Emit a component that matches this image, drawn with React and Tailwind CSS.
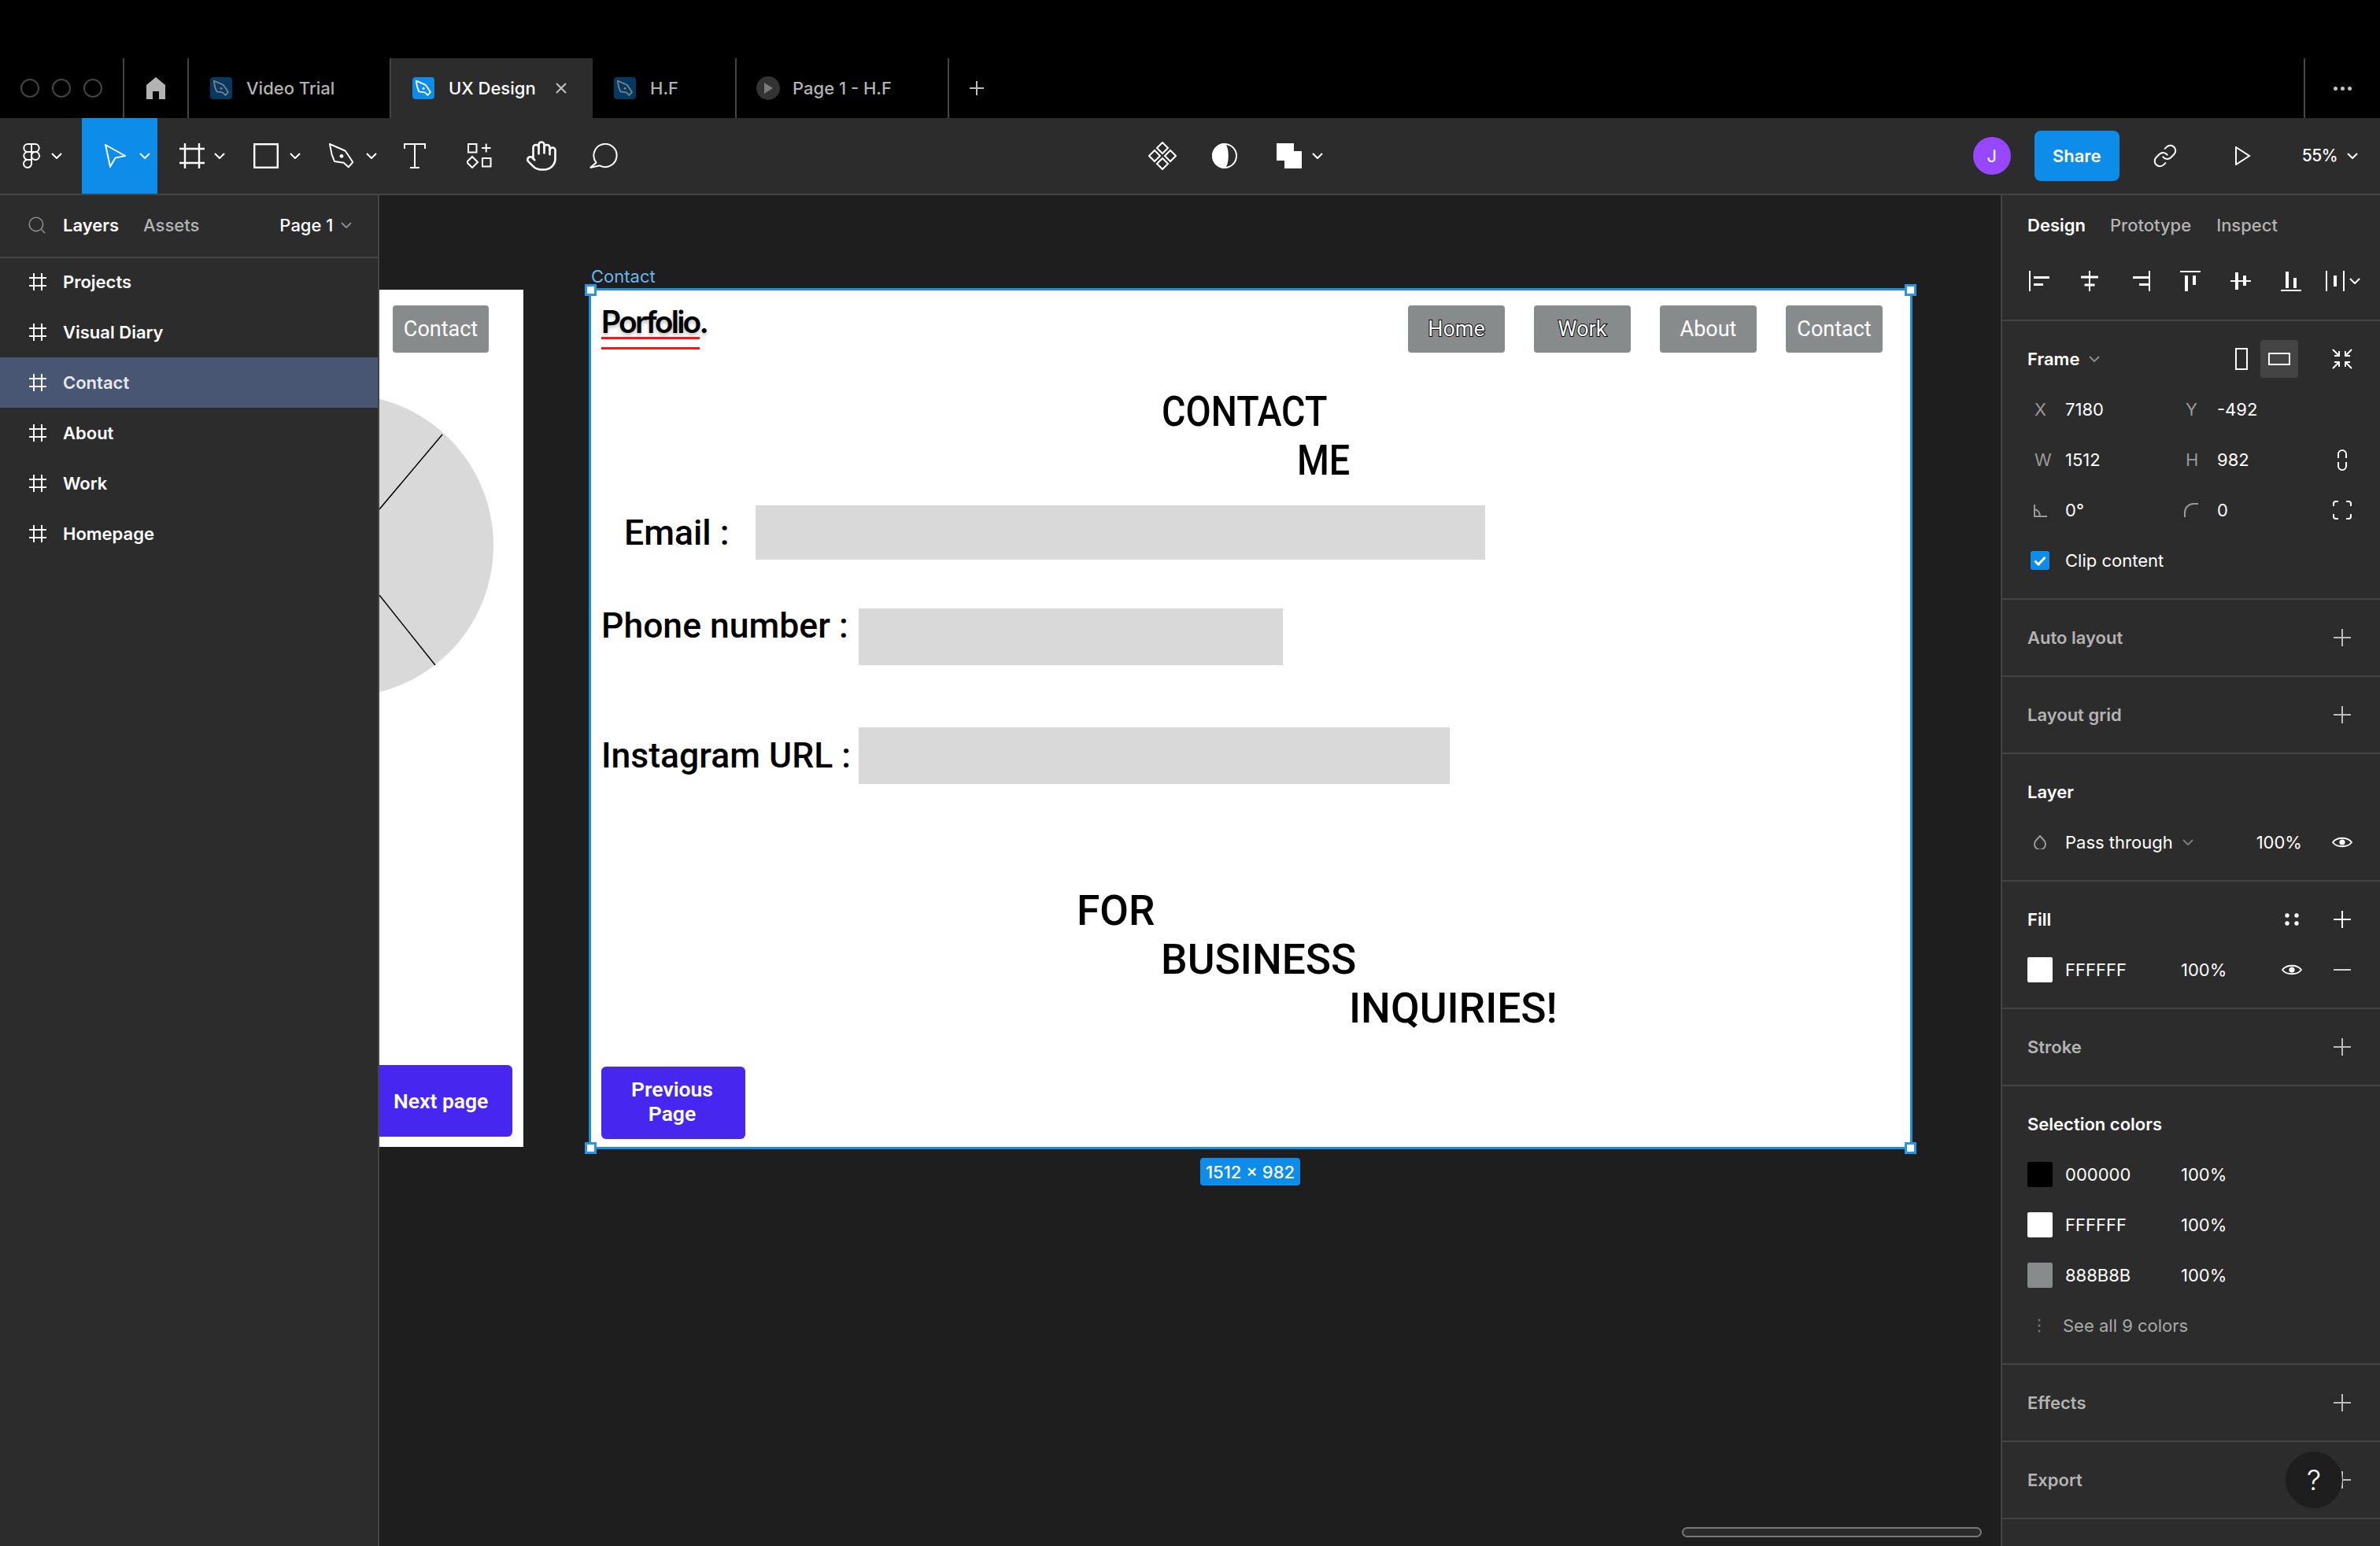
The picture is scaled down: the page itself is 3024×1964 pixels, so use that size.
import React from 'react'
import { Search, Hand, Link } from 'lucide-react'

const Chevron = ({ color = '#fff', className = '' }) => (
  <svg width="14" height="8" viewBox="0 0 14 8" fill="none" stroke={color} strokeWidth="2" className={`shrink-0 ${className}`}>
    <path d="M1 1l6 6 6-6" />
  </svg>
)

const Plus = ({ color = '#bdbdbd' }) => (
  <svg width="22" height="22" viewBox="0 0 22 22" stroke={color} strokeWidth="2">
    <path d="M11 0v22M0 11h22" />
  </svg>
)

const Eye = () => (
  <svg width="26" height="16" viewBox="0 0 26 16" fill="none" stroke="#fff" strokeWidth="1.8">
    <path d="M1 8C6 1 20 1 25 8 20 15 6 15 1 8Z" />
    <circle cx="13" cy="8" r="3.6" fill="#fff" stroke="none" />
  </svg>
)

const Hash = () => (
  <svg width="22" height="22" viewBox="0 0 22 22" stroke="#fff" strokeWidth="2">
    <path d="M6 0v22M16 0v22M0 6h22M0 16h22" />
  </svg>
)

const PenNib = ({ size = 32, color = '#fff', width = 2 }) => (
  <svg width={size} height={size} viewBox="0 0 32 32" fill="none" stroke={color} strokeWidth={width} strokeLinejoin="round">
    <path d="M1 1l19.5 8.5 3.5 5 6.3 9.5-5.6 6.3-6-5.6L7 23 3.7 14.7z" />
    <circle cx="16" cy="16.3" r="2.4" fill={color} stroke="none" />
  </svg>
)

const FileIcon = ({ active }) => (
  <div className={`flex h-[28px] w-[28px] items-center justify-center rounded-[4px] ${active ? 'bg-[#0d8ce9]' : 'bg-[#06395f]'}`}>
    <PenNib size={20} color={active ? '#fff' : '#75808a'} width={3} />
  </div>
)

const Tab = ({ width, label, active, pad = 27 }) => (
  <div
    style={{ width, paddingLeft: pad }}
    className={`flex h-full items-center ${active ? 'bg-[#2c2c2c] text-white' : 'border-r-2 border-[#444] text-[#b3b3b3]'}`}
  >
    <FileIcon active={active} />
    <span className="ml-[18px] font-medium">{label}</span>
    {active && (
      <svg width="14" height="14" viewBox="0 0 14 14" stroke="#c4c4c4" strokeWidth="2" className="ml-[25px]">
        <path d="M1 1l12 12M13 1L1 13" />
      </svg>
    )}
  </div>
)

const layers = ['Projects', 'Visual Diary', 'Contact', 'About', 'Work', 'Homepage']

const LeftPanel = () => (
  <aside className="flex w-[482px] shrink-0 flex-col border-r-2 border-[#444] bg-[#2c2c2c]">
    <div className="flex h-[80px] shrink-0 items-center border-b-2 border-[#444] pb-[3px] pl-[36px]">
      <Search size={26} color="#8a8a8a" strokeWidth={1.5} className="-ml-[2px]" />
      <span className="ml-[20px] font-semibold text-white">Layers</span>
      <span className="ml-[31px] font-medium text-[#b3b3b3]">Assets</span>
      <span className="ml-[102px] font-medium text-white">Page 1</span>
      <Chevron color="#8a8a8a" className="ml-[10px]" />
    </div>
    <div className="-mt-[2px]">
      {layers.map((name) => (
        <div
          key={name}
          className={`flex h-[64px] items-center pl-[37px] font-semibold ${name === 'Contact' ? 'bg-[#485674] text-[#e6e9ef]' : 'text-white'}`}
        >
          <Hash />
          <span className="ml-[21px]">{name}</span>
        </div>
      ))}
    </div>
  </aside>
)

const NavButton = ({ label, outlined }) => (
  <div
    className={`flex h-[60px] w-[123px] items-center justify-center rounded-[4px] bg-[#888b8b] text-[27px] text-white ${outlined ? '[-webkit-text-stroke:2px_#000] [paint-order:stroke_fill]' : ''}`}
  >
    {label}
  </div>
)

const Handle = ({ className }) => (
  <div className={`absolute h-[15px] w-[15px] border-[3px] border-[#2a95e0] bg-white ${className}`} />
)

const OldFrame = () => (
  <div className="absolute left-0 top-[120px] h-[1089px] w-[183px] overflow-hidden bg-white font-['Roboto',sans-serif]">
    <svg width="183" height="1089" className="absolute left-0 top-0">
      <circle cx="-47" cy="325" r="192" fill="#d9d9d9" />
      <path d="M0 279L80 184M0 388L71 477" stroke="#000" strokeWidth="1.5" fill="none" />
    </svg>
    <div className="absolute left-[17px] top-[20px] flex h-[60px] w-[122px] items-center justify-center rounded-[4px] bg-[#888b8b] text-[27px] text-white">
      Contact
    </div>
    <div className="absolute left-0 top-[985px] flex h-[91px] w-[169px] items-center rounded-r-[6px] bg-[#4727f0] pl-[18px] text-[26.5px] font-semibold text-white">
      Next page
    </div>
  </div>
)

const ContactFrame = () => (
  <div className="absolute left-[269px] top-[121px] flex h-[1088px] w-[1676px] flex-col bg-white font-['Roboto',sans-serif] font-medium text-black outline-[3px] outline-[#1a8fe0]">
    <span className="absolute -top-[32px] left-0 font-['Inter',sans-serif] font-normal text-[#6bb5ea]">Contact</span>
    <Handle className="-left-[8px] -top-[8px]" />
    <Handle className="-right-[8px] -top-[8px]" />
    <Handle className="-bottom-[9px] -left-[8px]" />
    <Handle className="-bottom-[9px] -right-[8px]" />

    <div className="flex h-[123px] shrink-0 justify-between pl-[13px] pr-[35px] pt-[19px]">
      <div className="w-[133px]">
        <div className="mt-[3px] h-[36px] font-['Inter',sans-serif] text-[39px] leading-[36px] font-semibold tracking-[-2.8px] [text-shadow:0_3px_4px_rgba(0,0,0,0.25)]">
          Porfolio.
        </div>
        <div className="mt-[1px] h-[3px] w-[125px] bg-[#fb1515]" />
        <div className="mt-[10px] h-[3px] w-[125px] bg-[#fb1515]" />
      </div>
      <div className="flex gap-[37px] font-normal">
        <NavButton label="Home" outlined />
        <NavButton label="Work" outlined />
        <NavButton label="About" />
        <NavButton label="Contact" />
      </div>
    </div>

    <div className="text-[54px] leading-[62px]">
      <div className="ml-[725px] origin-left scale-x-[0.865]">CONTACT</div>
      <div className="ml-[897px] origin-left scale-x-[0.865]">ME</div>
    </div>

    <div className="mt-[26px] flex h-[69px] items-center text-[44.5px]">
      <span className="ml-[42px] w-[167px]">Email :</span>
      <div className="h-full w-[927px] bg-[#d9d9d9]" />
    </div>
    <div className="mt-[62px] flex h-[72px] text-[44.5px]">
      <span className="ml-[13px] h-[44px] w-[327px] leading-[44px]">Phone number :</span>
      <div className="h-full w-[539px] bg-[#d9d9d9]" />
    </div>
    <div className="mt-[79px] flex h-[72px] items-center text-[44.5px]">
      <span className="ml-[13px] w-[327px]">Instagram URL :</span>
      <div className="h-full w-[751px] bg-[#d9d9d9]" />
    </div>

    <div className="mt-[130px] text-[53.3px] leading-[62px]">
      <div className="ml-[617px]">FOR</div>
      <div className="ml-[724px]">BUSINESS</div>
      <div className="ml-[963px]">INQUIRIES!</div>
    </div>

    <div className="ml-[13px] mt-[43px] flex h-[92px] w-[183px] items-center justify-center rounded-[6px] bg-[#4727f0] pb-[4px] pr-[3px] text-center text-[26.5px] leading-[31px] font-semibold text-white">
      Previous
      <br />
      Page
    </div>

    <div className="absolute left-[774px] top-[1102px] flex h-[35px] w-[127px] items-center justify-center rounded-[4px] bg-[#0d8ce9] font-['Inter',sans-serif] font-medium text-white">
      1512 × 982
    </div>
  </div>
)

const Section = ({ title, height = 98, children }) => (
  <section style={{ height }} className="shrink-0 border-b-2 border-[#444] px-[32px]">
    {children || (
      <div className="flex h-full items-center justify-between">
        <span className="font-semibold text-[#b3b3b3]">{title}</span>
        <span className="mr-[5px]">
          <Plus />
        </span>
      </div>
    )}
  </section>
)

const Row = ({ children, className = '' }) => <div className={`flex h-[64px] items-center ${className}`}>{children}</div>

const Title = ({ children }) => <span className="font-semibold text-white">{children}</span>

const Swatch = ({ color }) => <div className={`h-[32px] w-[32px] rounded-[2px] ${color}`} />

const ColorRow = ({ color, hex, children }) => (
  <Row>
    <Swatch color={color} />
    <span className="ml-[16px] w-[147px] text-white">{hex}</span>
    <span className="text-white">100%</span>
    {children}
  </Row>
)

const AlignIcon = ({ children, width = 26 }) => (
  <svg width={width} height="26" viewBox={`0 0 ${width} 26`} fill="#fff">
    {children}
  </svg>
)

const aligns = [
  <><rect x="0" width="2" height="26" /><rect x="6" y="7" width="20" height="3" /><rect x="6" y="16" width="12" height="3" /></>,
  <><rect x="12" width="2" height="26" /><rect x="2" y="6.5" width="22" height="3" /><rect x="6.5" y="16.5" width="13" height="3" /></>,
  <><rect x="24" width="2" height="26" /><rect x="4" y="7" width="20" height="3" /><rect x="12" y="16" width="12" height="3" /></>,
  <><rect width="26" height="2" /><rect x="6" y="6" width="4" height="20" /><rect x="16" y="6" width="4" height="12" /></>,
  <><rect y="12" width="26" height="2" /><rect x="6" y="2" width="4" height="22" /><rect x="16" y="6" width="4" height="13" /></>,
  <><rect y="24" width="26" height="2" /><rect x="6" y="1" width="4" height="21" /><rect x="16" y="9" width="4" height="13" /></>,
]

const CellLabel = ({ children }) => <span className="w-[48px] pl-[9px] text-[#9a9a9a]">{children}</span>

const RightPanel = () => (
  <aside className="flex w-[482px] shrink-0 flex-col border-l-2 border-[#444] bg-[#2c2c2c] text-white">
    <Section height={160}>
      <div className="flex h-[70px] items-center pt-[6px]">
        <span className="font-semibold text-white">Design</span>
        <span className="ml-[31px] font-medium text-[#b3b3b3]">Prototype</span>
        <span className="ml-[32px] font-medium text-[#b3b3b3]">Inspect</span>
      </div>
      <div className="mt-[7px] flex h-[64px] items-center pl-[2px]">
        {aligns.map((icon, i) => (
          <div key={i} className="w-[64px] shrink-0">
            <AlignIcon>{icon}</AlignIcon>
          </div>
        ))}
        <div className="-ml-[7px] flex items-center gap-[6px]">
          <AlignIcon width={24}>
            <rect width="2" height="26" />
            <rect x="22" width="2" height="26" />
            <rect x="10" y="6" width="4" height="14" />
          </AlignIcon>
          <Chevron />
        </div>
      </div>
    </Section>

    <Section height={354}>
      <div className="pt-[16px]">
        <Row>
          <Title>Frame</Title>
          <Chevron color="#8a8a8a" className="ml-[12px]" />
          <svg width="16" height="28" className="ml-auto shrink-0" fill="none" stroke="#fff" strokeWidth="2">
            <rect x="1" y="1" width="14" height="26" />
          </svg>
          <div className="ml-[16px] flex h-[48px] w-[48px] shrink-0 items-center justify-center rounded-[3px] bg-[#444]">
            <svg width="28" height="16" fill="none" stroke="#fff" strokeWidth="2">
              <rect x="1" y="1" width="26" height="14" />
            </svg>
          </div>
          <svg width="26" height="26" viewBox="0 0 26 26" fill="none" stroke="#fff" strokeWidth="2" className="ml-[43px] mr-[3px] shrink-0">
            <path d="M1 1l8 8M9 3v6H3M25 1l-8 8M17 3v6h6M1 25l8-8M3 17h6v6M25 25l-8-8M23 17h-6v6" />
          </svg>
        </Row>
        <Row>
          <CellLabel>X</CellLabel>
          <span className="w-[153px]">7180</span>
          <span className="w-[40px] text-[#9a9a9a]">Y</span>
          <span>-492</span>
        </Row>
        <Row>
          <CellLabel>W</CellLabel>
          <span className="w-[153px]">1512</span>
          <span className="w-[40px] text-[#9a9a9a]">H</span>
          <span className="w-[153px]">982</span>
          <svg width="12" height="27" viewBox="0 0 12 27" fill="none" stroke="#fff" strokeWidth="2">
            <path d="M1 11V6a5 5 0 0 1 10 0v5M1 16v5a5 5 0 0 0 10 0v-5" />
          </svg>
        </Row>
        <Row>
          <div className="w-[48px] pl-[8px]">
            <svg width="17" height="17" viewBox="0 0 17 17" fill="none" stroke="#9a9a9a" strokeWidth="2">
              <path d="M1 1v15h16M1 7c4 1 7 4 7 9" />
            </svg>
          </div>
          <span className="w-[151px]">0°</span>
          <svg width="18" height="18" viewBox="0 0 18 18" fill="none" stroke="#9a9a9a" strokeWidth="2">
            <path d="M1 18v-6A11 11 0 0 1 12 1h6" />
          </svg>
          <span className="ml-[24px] w-[147px]">0</span>
          <svg width="24" height="24" viewBox="0 0 24 24" fill="none" stroke="#fff" strokeWidth="2">
            <path d="M1 7V4a3 3 0 0 1 3-3h3M17 1h3a3 3 0 0 1 3 3v3M23 17v3a3 3 0 0 1-3 3h-3M7 23H4a3 3 0 0 1-3-3v-3" />
          </svg>
        </Row>
        <Row>
          <div className="ml-[4px] flex h-[24px] w-[24px] items-center justify-center rounded-[3px] bg-[#0d8ce9]">
            <svg width="16" height="13" viewBox="0 0 16 13" fill="none" stroke="#fff" strokeWidth="3">
              <path d="M1.5 6.5l4.5 4.5 8.5-9" />
            </svg>
          </div>
          <span className="ml-[20px]">Clip content</span>
        </Row>
      </div>
    </Section>

    <Section title="Auto layout" />
    <Section title="Layout grid" />

    <Section height={162}>
      <div className="pt-[16px]">
        <Row>
          <Title>Layer</Title>
        </Row>
        <Row>
          <div className="w-[48px] pl-[8px]">
            <svg width="16" height="18" viewBox="0 0 16 18" fill="none" stroke="#9a9a9a" strokeWidth="2">
              <path d="M8 1l5 5.5a7 7 0 1 1-10 0z" />
            </svg>
          </div>
          <span>Pass through</span>
          <Chevron color="#7a7a7a" className="ml-[12px]" />
          <span className="ml-[80px]">100%</span>
          <span className="ml-auto mr-[3px]">
            <Eye />
          </span>
        </Row>
      </div>
    </Section>

    <Section height={162}>
      <div className="pt-[16px]">
        <Row>
          <Title>Fill</Title>
          <svg width="18" height="16" fill="#fff" className="ml-auto shrink-0">
            <circle cx="3" cy="3" r="2.7" />
            <circle cx="15" cy="3" r="2.7" />
            <circle cx="3" cy="13" r="2.7" />
            <circle cx="15" cy="13" r="2.7" />
          </svg>
          <span className="ml-[44px] mr-[5px]">
            <Plus color="#fff" />
          </span>
        </Row>
        <ColorRow color="bg-white" hex="FFFFFF">
          <span className="ml-auto">
            <Eye />
          </span>
          <svg width="22" height="2" className="ml-[40px] mr-[5px]">
            <rect width="22" height="2" fill="#d0d0d0" />
          </svg>
        </ColorRow>
      </div>
    </Section>

    <Section title="Stroke" />

    <Section height={354}>
      <div className="pt-[16px]">
        <Row>
          <Title>Selection colors</Title>
        </Row>
        <ColorRow color="bg-black" hex="000000" />
        <ColorRow color="bg-white" hex="FFFFFF" />
        <ColorRow color="bg-[#888b8b]" hex="888B8B" />
        <Row>
          <svg width="4" height="18" fill="#777" className="ml-[13px]">
            <circle cx="2" cy="2" r="1.5" />
            <circle cx="2" cy="9" r="1.5" />
            <circle cx="2" cy="16" r="1.5" />
          </svg>
          <span className="ml-[28px] text-[#a8a8a8]">See all 9 colors</span>
        </Row>
      </div>
    </Section>

    <Section title="Effects" />
    <Section title="Export" />
  </aside>
)

const App = () => (
  <div className="relative flex h-[1964px] w-[3024px] flex-col overflow-hidden whitespace-nowrap bg-black font-['Inter',sans-serif] text-[22px] leading-[28px]">
    {/* tab strip */}
    <div className="mt-[74px] flex h-[76px] shrink-0 items-center">
      <div className="flex h-full w-[158px] items-center gap-[16px] border-r-2 border-[#444] pl-[26px]">
        <div className="h-[24px] w-[24px] rounded-full border-2 border-[#444]" />
        <div className="h-[24px] w-[24px] rounded-full border-2 border-[#444]" />
        <div className="h-[24px] w-[24px] rounded-full border-2 border-[#444]" />
      </div>
      <div className="flex h-full w-[82px] items-center justify-center border-r-2 border-[#444]">
        <svg width="24" height="28" viewBox="0 0 24 28" fill="#b3b3b3">
          <path d="M12 0l12 10v18h-8V18H8v10H0V10z" />
        </svg>
      </div>
      <Tab width={257} label="Video Trial" />
      <Tab width={256} label="UX Design" active />
      <Tab width={183} label="H.F" />
      <div className="flex h-full w-[270px] items-center border-r-2 border-[#444] pl-[25px] font-medium text-[#b3b3b3]">
        <div className="flex h-[30px] w-[30px] items-center justify-center rounded-full bg-[#333]">
          <svg width="11" height="14" fill="#7a7a7a">
            <path d="M0 0l11 7-11 7z" />
          </svg>
        </div>
        <span className="ml-[16px]">Page 1 - H.F</span>
      </div>
      <svg width="18" height="18" viewBox="0 0 18 18" stroke="#bdbdbd" strokeWidth="2" className="ml-[26px]">
        <path d="M9 0v18M0 9h18" />
      </svg>
      <div className="ml-auto flex h-full w-[97px] items-center justify-center gap-[4px] border-l-2 border-[#444]">
        <div className="h-[5px] w-[5px] rounded-full bg-[#c4c4c4]" />
        <div className="h-[5px] w-[5px] rounded-full bg-[#c4c4c4]" />
        <div className="h-[5px] w-[5px] rounded-full bg-[#c4c4c4]" />
      </div>
    </div>

    {/* toolbar */}
    <div className="flex h-[98px] shrink-0 items-center border-b-2 border-[#444] bg-[#2c2c2c] text-white">
      <div className="flex h-full w-[104px] items-center gap-[14px] pl-[29px]">
        <svg width="22" height="32" viewBox="0 0 22 32" fill="none" stroke="#fff" strokeWidth="2">
          <path d="M11 1H6.3a5 5 0 0 0 0 10H11zM11 1h4.7a5 5 0 0 1 0 10H11zM11 11H6.3a5 5 0 0 0 0 10H11z" />
          <circle cx="16" cy="16" r="5" />
          <path d="M6.3 21H11v5a5 5 0 1 1-4.7-5z" />
        </svg>
        <Chevron />
      </div>
      <div className="flex h-full w-[96px] items-center gap-[17px] bg-[#0d8ce9] pl-[29px]">
        <svg width="27" height="30" viewBox="0 0 27 30" fill="none" stroke="#fff" strokeWidth="2">
          <path d="M1 1l25 14-12.4 2.6L7 28.7z" />
        </svg>
        <Chevron />
      </div>
      <div className="flex h-full w-[96px] items-center gap-[12px] pl-[28px]">
        <svg width="32" height="32" viewBox="0 0 32 32" stroke="#fff" strokeWidth="2.4">
          <path d="M7 0v32M25 0v32M0 7h32M0 25h32" />
        </svg>
        <Chevron />
      </div>
      <div className="flex h-full w-[96px] items-center gap-[14px] pl-[26px]">
        <svg width="32" height="32" fill="none" stroke="#fff" strokeWidth="2.4">
          <rect x="1.2" y="1.2" width="29.6" height="29.6" />
        </svg>
        <Chevron />
      </div>
      <div className="flex h-full w-[121px] items-center gap-[15px] pl-[26px]">
        <PenNib />
        <Chevron />
      </div>
      <svg width="28" height="32" viewBox="0 0 28 32" fill="none" stroke="#fff" strokeWidth="2">
        <path d="M1 7V1h26v6M14 1v30M8 31h12" />
      </svg>
      <svg width="32" height="32" viewBox="0 0 32 32" fill="none" stroke="#fff" strokeWidth="2" className="ml-[52px]">
        <rect x="2" y="1" width="10.5" height="10.5" />
        <path d="M24.7 0.5v11M19 6h11.5M7 17l7 7-7 7-7-7z" />
        <rect x="20" y="19" width="10.5" height="10.5" />
      </svg>
      <Hand size={42} strokeWidth={1.5} className="ml-[42px]" />
      <svg width="36" height="33" viewBox="0 0 36 33" fill="none" stroke="#fff" strokeWidth="2" className="ml-[40px]">
        <path d="M8.5 24.5a14.6 14.6 0 1 1 4.5 3.8L1 31z" />
      </svg>

      {/* center */}
      <svg width="36" height="36" viewBox="0 0 36 36" fill="none" stroke="#fff" strokeWidth="2" className="ml-[674px]">
        <path d="M18 1l7 7-7 7-7-7zM18 21l7 7-7 7-7-7zM8 11l7 7-7 7-7-7zM28 11l7 7-7 7-7-7z" />
      </svg>
      <svg width="32" height="32" viewBox="0 0 32 32" fill="none" stroke="#fff" strokeWidth="2" className="ml-[45px]">
        <circle cx="16" cy="16" r="15" />
        <path d="M16 1A15 15 0 0 0 16 31C21 25 21 7 16 1Z" fill="#fff" />
      </svg>
      <svg width="32" height="32" viewBox="0 0 32 32" fill="#fff" className="ml-[50px]">
        <path d="M0 0h22v10h10v22H10V22H0z" />
      </svg>
      <Chevron className="ml-[13px]" />

      {/* right */}
      <div className="ml-auto flex items-center">
        <div className="flex h-[48px] w-[48px] items-center justify-center rounded-full bg-[#9747ff]">J</div>
        <div className="ml-[30px] flex h-[64px] w-[108px] items-center justify-center rounded-[8px] bg-[#0d8ce9] font-semibold">
          Share
        </div>
        <Link size={32} strokeWidth={1.5} className="ml-[42px]" />
        <svg width="20" height="24" viewBox="0 0 20 24" fill="none" stroke="#fff" strokeWidth="2" className="ml-[73px]">
          <path d="M1 1l17 11L1 23z" />
        </svg>
        <span className="ml-[65px] text-[21px] tracking-tight font-medium">55%</span>
        <Chevron className="ml-[12px] mr-[28px]" />
      </div>
    </div>

    {/* workspace */}
    <div className="flex min-h-0 flex-1">
      <LeftPanel />
      <main className="relative min-w-0 flex-1 overflow-hidden bg-[#1e1e1e]">
        <OldFrame />
        <ContactFrame />
        <div className="absolute left-[1655px] top-[1692px] h-[13px] w-[381px] rounded-full border-2 border-[#777] bg-[#2c2c2c]" />
      </main>
      <RightPanel />
    </div>

    <div className="absolute left-[2904px] top-[1844px] flex h-[72px] w-[72px] items-center justify-center rounded-full bg-[#1e1e1e] text-[36px] font-light text-white">
      ?
    </div>
  </div>
)

export default App
